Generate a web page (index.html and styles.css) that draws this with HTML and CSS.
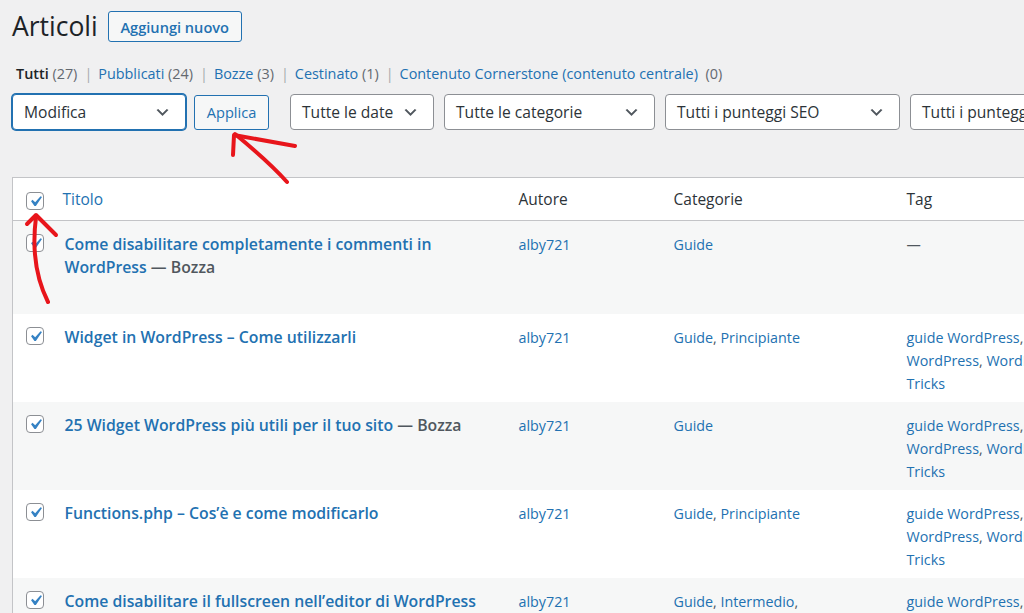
FILE: index.html
```html
<!DOCTYPE html>
<html lang="it">
<head>
<meta charset="utf-8">
<title>Articoli</title>
<link rel="stylesheet" href="styles.css">
</head>
<body>
<div class="page">
  <div class="wrap">
    <div class="heading">
      <h1>Articoli</h1>
      <a class="btn btn-add" href="#">Aggiungi nuovo</a>
    </div>

    <ul class="subsubsub">
      <li><span class="current">Tutti</span> <span class="count">(27)</span><span class="sep">|</span></li>
      <li><a href="#">Pubblicati</a> <span class="count">(24)</span><span class="sep">|</span></li>
      <li><a href="#">Bozze</a> <span class="count">(3)</span><span class="sep">|</span></li>
      <li><a href="#">Cestinato</a> <span class="count">(1)</span><span class="sep">|</span></li>
      <li><a href="#">Contenuto Cornerstone (contenuto centrale)</a>&nbsp; <span class="count">(0)</span></li>
    </ul>

    <div class="tablenav">
      <div class="select select-focus w-bulk"><span>Modifica</span><svg class="chev" viewBox="0 0 20 20"><path d="M5 6l5 5 5-5 2 1-7 7-7-7 2-1z"/></svg></div>
      <button class="btn btn-apply">Applica</button>
      <div class="filters">
        <div class="select w-date"><span>Tutte le date</span><svg class="chev" viewBox="0 0 20 20"><path d="M5 6l5 5 5-5 2 1-7 7-7-7 2-1z"/></svg></div>
        <div class="select w-cat"><span>Tutte le categorie</span><svg class="chev" viewBox="0 0 20 20"><path d="M5 6l5 5 5-5 2 1-7 7-7-7 2-1z"/></svg></div>
        <div class="select w-seo"><span>Tutti i punteggi SEO</span><svg class="chev" viewBox="0 0 20 20"><path d="M5 6l5 5 5-5 2 1-7 7-7-7 2-1z"/></svg></div>
        <div class="select w-read"><span>Tutti i punteggi di leggibilità</span><svg class="chev" viewBox="0 0 20 20"><path d="M5 6l5 5 5-5 2 1-7 7-7-7 2-1z"/></svg></div>
      </div>
    </div>

    <table class="posts">
      <colgroup>
        <col class="c-cb"><col class="c-title"><col class="c-author"><col class="c-cat"><col class="c-tag">
      </colgroup>
      <thead>
        <tr>
          <th class="cb"><span class="checkbox"><svg viewBox="0 0 20 20"><path d="M14.83 4.89l1.34.94-5.81 8.38H9.02L5.78 9.67l1.34-1.25 2.57 2.4z"/></svg></span></th>
          <th class="sortable"><a href="#">Titolo</a></th>
          <th>Autore</th>
          <th>Categorie</th>
          <th>Tag</th>
        </tr>
      </thead>
      <tbody>
        <tr class="alt">
          <td class="cb"><span class="checkbox"><svg viewBox="0 0 20 20"><path d="M14.83 4.89l1.34.94-5.81 8.38H9.02L5.78 9.67l1.34-1.25 2.57 2.4z"/></svg></span></td>
          <td class="title"><strong><a href="#">Come disabilitare completamente i commenti in WordPress</a> — <span class="state">Bozza</span></strong><div class="row-actions">Modifica</div></td>
          <td><a href="#">alby721</a></td>
          <td><a href="#">Guide</a></td>
          <td class="muted">—</td>
        </tr>
        <tr>
          <td class="cb"><span class="checkbox"><svg viewBox="0 0 20 20"><path d="M14.83 4.89l1.34.94-5.81 8.38H9.02L5.78 9.67l1.34-1.25 2.57 2.4z"/></svg></span></td>
          <td class="title"><strong><a href="#">Widget in WordPress – Come utilizzarli</a></strong><div class="row-actions">Modifica</div></td>
          <td><a href="#">alby721</a></td>
          <td><a href="#">Guide</a>, <a href="#">Principiante</a></td>
          <td class="tags"><a href="#">guide WordPress</a>, <a href="#">plugin</a><br><a href="#">WordPress</a>, <a href="#">WordPress Tips &amp;</a><br><a href="#">Tricks</a></td>
        </tr>
        <tr class="alt">
          <td class="cb"><span class="checkbox"><svg viewBox="0 0 20 20"><path d="M14.83 4.89l1.34.94-5.81 8.38H9.02L5.78 9.67l1.34-1.25 2.57 2.4z"/></svg></span></td>
          <td class="title"><strong><a href="#">25 Widget WordPress più utili per il tuo sito</a> — <span class="state">Bozza</span></strong><div class="row-actions">Modifica</div></td>
          <td><a href="#">alby721</a></td>
          <td><a href="#">Guide</a></td>
          <td class="tags"><a href="#">guide WordPress</a>, <a href="#">plugin</a><br><a href="#">WordPress</a>, <a href="#">WordPress Tips &amp;</a><br><a href="#">Tricks</a></td>
        </tr>
        <tr>
          <td class="cb"><span class="checkbox"><svg viewBox="0 0 20 20"><path d="M14.83 4.89l1.34.94-5.81 8.38H9.02L5.78 9.67l1.34-1.25 2.57 2.4z"/></svg></span></td>
          <td class="title"><strong><a href="#">Functions.php – Cos’è e come modificarlo</a></strong><div class="row-actions">Modifica</div></td>
          <td><a href="#">alby721</a></td>
          <td><a href="#">Guide</a>, <a href="#">Principiante</a></td>
          <td class="tags"><a href="#">guide WordPress</a>, <a href="#">plugin</a><br><a href="#">WordPress</a>, <a href="#">WordPress Tips &amp;</a><br><a href="#">Tricks</a></td>
        </tr>
        <tr class="alt">
          <td class="cb"><span class="checkbox"><svg viewBox="0 0 20 20"><path d="M14.83 4.89l1.34.94-5.81 8.38H9.02L5.78 9.67l1.34-1.25 2.57 2.4z"/></svg></span></td>
          <td class="title"><strong><a href="#">Come disabilitare il fullscreen nell’editor di WordPress</a></strong><div class="row-actions">Modifica</div></td>
          <td><a href="#">alby721</a></td>
          <td><a href="#">Guide</a>, <a href="#">Intermedio</a>,<br><a href="#">Principiante</a></td>
          <td class="tags"><a href="#">guide WordPress</a>, <a href="#">plugin</a><br><a href="#">WordPress</a>, <a href="#">WordPress Tips &amp;</a><br><a href="#">Tricks</a></td>
        </tr>
      </tbody>
    </table>
  </div>

  <svg class="annot" viewBox="0 0 1024 613" width="1024" height="613">
    <g fill="none" stroke="#e8151b" stroke-width="4" stroke-linecap="round" stroke-linejoin="round">
      <path d="M287 182 C272 165 252 148 235 134"/>
      <path d="M233 155 L234 135 L295 146"/>
      <path d="M48 302 C38 282 31 256 36 217"/>
      <path d="M27 224 L36 215 L56 235"/>
    </g>
  </svg>
</div>
</body>
</html>
```

FILE: styles.css
```css
* { box-sizing: border-box; }

html, body {
  margin: 0;
  padding: 0;
}

body {
  background: #f0f0f1;
  color: #3c434a;
  font-family: "Open Sans", "Noto Sans", sans-serif;
  font-size: 14.3px;
  overflow: hidden;
}

a { color: #2271b1; text-decoration: none; }

.page {
  position: relative;
  width: 1024px;
  height: 613px;
  overflow: hidden;
}

.wrap {
  padding: 11px 0 0 12px;
}

/* heading */
.heading {
  display: flex;
  align-items: center;
  gap: 10px;
  height: 31px;
}

.heading h1 {
  margin: 0;
  font-size: 26.5px;
  font-weight: 400;
  line-height: 31px;
  color: #1d2327;
}

.btn {
  display: inline-flex;
  align-items: center;
  justify-content: center;
  flex: none;
  border: 1px solid #2271b1;
  border-radius: 3px;
  background: #f6f7f7;
  color: #2271b1;
  font-family: inherit;
  cursor: pointer;
}

.btn-add {
  height: 31px;
  width: 134px;
  font-size: 14.6px;
  font-weight: 600;
}

/* views */
.subsubsub {
  list-style: none;
  margin: 21px 0 0 4px;
  padding: 0;
  display: flex;
  line-height: 22px;
  font-size: 14.4px;
  color: #646970;
}

.subsubsub li { white-space: nowrap; }

.subsubsub .current { color: #1d2327; font-weight: 600; }
.subsubsub .count { color: #646970; }
.subsubsub .sep { color: #a7aaad; margin: 0 6px 0 7px; }

/* tablenav */
.tablenav {
  display: flex;
  align-items: center;
  margin-top: 9px;
  height: 36px;
  white-space: nowrap;
}

.select {
  display: flex;
  align-items: center;
  justify-content: space-between;
  height: 36px;
  padding: 0 14px 0 11px;
  background: #fff;
  border: 1px solid #8c8f94;
  border-radius: 4px;
  color: #2c3338;
  font-size: 15.6px;
  flex: none;
  overflow: hidden;
}

.select span { white-space: nowrap; }

.select .chev {
  width: 17px;
  height: 17px;
  fill: #50575e;
  flex: none;
  margin-left: 8px;
}

.select-focus {
  border-color: #2271b1;
  box-shadow: 0 0 0 1px #2271b1;
}

.w-bulk { width: 174px; }
.w-date { width: 144px; }
.w-cat { width: 211px; }
.w-seo { width: 235px; }
.w-read { width: 300px; }

.btn-apply {
  margin-left: 8px;
  height: 35px;
  width: 75px;
  padding: 0;
  font-size: 14.6px;
  font-weight: 400;
}

.filters {
  display: flex;
  flex: none;
  gap: 10px;
  margin-left: 21px;
}

/* table */
.posts {
  margin-top: 47px;
  width: 1134px;
  table-layout: fixed;
  border-collapse: collapse;
  background: #fff;
  border: 1px solid #c3c4c7;
  border-right: 0;
  border-bottom: 0;
}

.c-cb { width: 40px; }
.c-title { width: 456px; }
.c-author { width: 155px; }
.c-cat { width: 233px; }
.c-tag { width: 250px; }

.posts th {
  height: 43px;
  padding: 0 10px;
  text-align: left;
  font-weight: 400;
  font-size: 15.5px;
  color: #2c3338;
  border-bottom: 1px solid #c3c4c7;
  vertical-align: middle;
}

.posts th.cb {
  padding: 3px 0 0 13px;
}

.posts td {
  padding: 12px 10px 7px;
  vertical-align: top;
  line-height: 23px;
  font-size: 14.3px;
  color: #50575e;
}

.posts td.title {
  padding-left: 12px;
}

.posts td.cb {
  padding: 13px 0 0 13px;
}

.posts tr.alt td { background: #f6f7f7; }

.posts td.title strong {
  font-weight: 600;
  font-size: 15.8px;
  color: #50575e;
}

.posts td.tags { white-space: nowrap; }

.row-actions {
  height: 28px;
  visibility: hidden;
}

.checkbox {
  display: block;
  width: 18px;
  height: 18px;
  border: 1px solid #8c8f94;
  border-radius: 4px;
  background: #fff;
}

.checkbox svg {
  display: block;
  width: 21px;
  height: 21px;
  margin: -2px 0 0 -2px;
  fill: #3582c4;
}

/* annotations */
.annot {
  position: absolute;
  top: 0;
  left: 0;
  pointer-events: none;
}
```
